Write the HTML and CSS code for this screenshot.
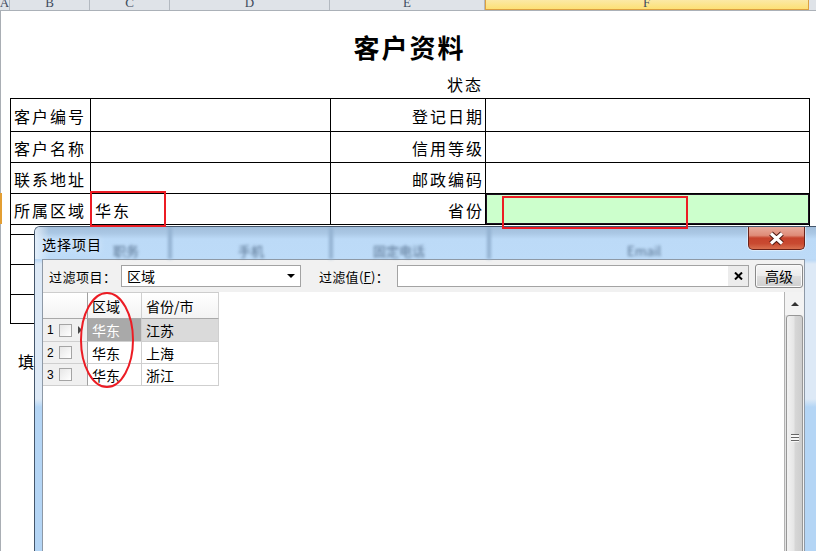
FILE: index.html
```html
<!DOCTYPE html>
<html lang="zh-CN">
<head>
<meta charset="utf-8">
<title>客户资料</title>
<link rel="stylesheet" href="styles.css">
</head>
<body>
<div class="sheet">
  <div class="colheads">
    <div class="ch"><span>A</span></div>
    <div class="ch"><span>B</span></div>
    <div class="ch"><span>C</span></div>
    <div class="ch"><span>D</span></div>
    <div class="ch"><span>E</span></div>
    <div class="ch ch-active"><span>F</span></div>
    <div class="ch ch-rest"></div>
  </div>
  <div class="title">客户资料</div>
  <div class="status-row"><div class="status">状态</div></div>
  <div class="form">
    <div class="cell lbl">客户编号</div><div class="cell"></div><div class="cell rlbl">登记日期</div><div class="cell"></div>
    <div class="cell lbl">客户名称</div><div class="cell"></div><div class="cell rlbl">信用等级</div><div class="cell"></div>
    <div class="cell lbl">联系地址</div><div class="cell"></div><div class="cell rlbl">邮政编码</div><div class="cell"></div>
    <div class="cell lbl">所属区域</div><div class="cell val">华东</div><div class="cell rlbl">省份</div><div class="cell sel"></div>
    <div class="cell"></div><div class="cell wide"></div>
    <div class="cell"></div><div class="cell wide"></div>
    <div class="cell"></div><div class="cell wide"></div>
    <div class="cell"></div><div class="cell wide"></div>
  </div>
  <div class="note">填</div>
</div>

<div class="row-marker"></div>
<div class="mark mark-region"></div>
<div class="mark mark-province"></div>

<div class="dialog">
  <div class="titlebar">
    <div class="ghost">
      <div class="gseg g1">职务</div><div class="gline"></div>
      <div class="gseg g2">手机</div><div class="gline"></div>
      <div class="gseg g3">固定电话</div><div class="gline"></div>
      <div class="gseg g4">Email</div>
    </div>
    <div class="title-text">选择项目</div>
    <div class="close">
      <svg width="17" height="15" viewBox="0 0 17 15">
        <path d="M3 2.5 L14 12.5 M14 2.5 L3 12.5" stroke="#4d1810" stroke-width="5.2" fill="none"/>
        <path d="M3 2.5 L14 12.5 M14 2.5 L3 12.5" stroke="#ffffff" stroke-width="3.2" fill="none"/>
      </svg>
    </div>
  </div>
  <div class="client">
    <div class="toolbar">
      <div class="tlabel">过滤项目：</div>
      <div class="combo"><span>区域</span><i class="caret"></i></div>
      <div class="tlabel tlabel2">过滤值(<u>F</u>)：</div>
      <div class="filter">
        <div class="clear">
          <svg width="9" height="8" viewBox="0 0 9 8"><path d="M1 0.5 L8 7.5 M8 0.5 L1 7.5" stroke="#000" stroke-width="2" fill="none"/></svg>
        </div>
      </div>
      <div class="btn">高级</div>
    </div>
    <div class="gridarea">
      <div class="grid">
        <div class="gh corner"></div>
        <div class="gh">区域</div>
        <div class="gh">省份/市</div>

        <div class="rh"><span class="num">1</span><span class="cb"></span><i class="arrow"></i></div>
        <div class="gc hl">华东</div>
        <div class="gc hl2">江苏</div>

        <div class="rh"><span class="num">2</span><span class="cb"></span></div>
        <div class="gc">华东</div>
        <div class="gc">上海</div>

        <div class="rh"><span class="num">3</span><span class="cb"></span></div>
        <div class="gc">华东</div>
        <div class="gc">浙江</div>
      </div>
      <div class="filler"></div>
      <div class="vscroll">
        <div class="up"><i class="uparrow"></i></div>
        <div class="thumb"><i class="grip"></i></div>
      </div>
    </div>
  </div>
</div>

<svg class="ellipse" width="58" height="99" viewBox="0 0 58 99">
  <ellipse cx="28" cy="49" rx="26" ry="47" fill="none" stroke="#ec1c24" stroke-width="2"/>
</svg>
</body>
</html>
```

FILE: styles.css
```css
* { box-sizing: border-box; margin: 0; padding: 0; }
html, body { width: 816px; height: 551px; overflow: hidden; }
body {
  position: relative;
  background: #fff;
  color: #000;
  font-family: "Liberation Sans", "Noto Sans CJK SC", sans-serif;
}

/* ---------- spreadsheet ---------- */
.sheet {
  height: 551px;
  box-shadow: inset 1px 0 0 #a9aeb4;
}
.colheads {
  display: grid;
  grid-template-columns: 10px 80px 80px 160px 155px 324px 7px;
  height: 11px;
  background: #dfe3e8;
  border-bottom: 1px solid #abb1b8;
}
.ch {
  height: 10px;
  overflow: hidden;
  display: flex;
  justify-content: center;
  align-items: flex-end;
  border-right: 1px solid #b3b9c0;
  font: 13px/13px "Liberation Serif", serif;
  color: #3d4a5c;
}
.ch span { display: block; margin-bottom: 1px; }
.ch-active {
  background: linear-gradient(180deg, #fbe9a6, #fddf70);
  border-right-color: #dca041;
  box-shadow: inset 1px 0 0 #dca041, inset 0 -1px 0 #dca041;
}
.ch-rest { border-right: 0; }

.title {
  margin-top: 19px;
  margin-left: 10px;
  width: 799px;
  height: 34px;
  text-align: center;
  font: 700 26px/34px "Noto Sans CJK SC", sans-serif;
  letter-spacing: 2px;
}
.status-row {
  display: grid;
  grid-template-columns: 330px 155px;
  height: 34px;
}
.status {
  grid-column: 2;
  align-self: end;
  text-align: right;
  padding-right: 2px;
  padding-bottom: 1px;
  font-size: 16px;
  line-height: 22px;
  letter-spacing: 2px;
}
.form {
  display: grid;
  margin-left: 10px;
  width: 800px;
  grid-template-columns: 79px 239px 154px 323px;
  grid-template-rows: 32px 30px 30px 30px 9px 29px 29px 28px;
  gap: 1px;
  background: #000;
  border: 1px solid #000;
}
.cell {
  background: #fff;
  display: flex;
  align-items: center;
  padding-top: 1px;
  font-size: 16px;
  letter-spacing: 2px;
  white-space: nowrap;
}
.lbl { padding-left: 3px; }
.rlbl { justify-content: flex-end; padding-right: 1px; }
.val { padding-left: 4px; }
.sel { background: #ccffcc; box-shadow: inset 0 0 0 1px #1d1020; }
.wide { grid-column: span 3; }
.note {
  margin-top: 28px;
  padding-left: 18px;
  font-size: 16px;
  line-height: 22px;
}

.row-marker {
  position: absolute;
  left: 0;
  top: 193px;
  width: 2px;
  height: 31px;
  background: #e39e33;
}
.mark {
  position: absolute;
  border: 2px solid #ec1c24;
  z-index: 5;
}
.mark-region { left: 90px; top: 191px; width: 76px; height: 36px; }
.mark-province { left: 502px; top: 196px; width: 186px; height: 33px; }

/* ---------- dialog ---------- */
.dialog {
  position: absolute;
  left: 34px;
  top: 226px;
  width: 782px;
  height: 340px;
  border: 1px solid #44566b;
  border-right: 0;
  border-radius: 6px 0 0 0;
  background: linear-gradient(180deg, #bcd9f6 0, #bcd9f6 33px, #dde9f6 37px, #dde9f6 172px, #b4d5f5 180px, #b4d5f5 100%);
  display: flex;
  flex-direction: column;
  overflow: hidden;
  z-index: 3;
}
.titlebar {
  position: relative;
  height: 32px;
  flex-shrink: 0;
  display: flex;
  align-items: flex-start;
  background:
    linear-gradient(90deg, rgba(235,243,251,.85) 0, rgba(235,243,251,0) 14px),
    linear-gradient(180deg, #a2bedb 0, #aac7e4 6px, #bcdaf7 12px, #bddbf8 100%);
}
.ghost {
  position: absolute;
  left: 0; top: 0; right: 0; bottom: 0;
  display: flex;
  filter: blur(1.4px);
  font-family: "Noto Sans CJK SC", sans-serif;
  font-size: 13px;
  color: #56718f;
}
.gseg { padding-top: 15px; line-height: 17px; white-space: nowrap; }
.g1 { width: 133px; padding-left: 78px; }
.g2 { width: 157px; padding-left: 66px; }
.g3 { width: 154px; padding-left: 40px; }
.g4 { padding-left: 136px; }
.gline { width: 4px; background: #93b2d1; }

.title-text {
  position: relative;
  padding: 7px 0 0 7px;
  font-family: "Noto Sans CJK SC", sans-serif;
  font-size: 14px;
  line-height: 20px;
  letter-spacing: 1px;
  text-shadow: 0 0 6px #e8f2fc;
}
.close {
  position: relative;
  margin-left: auto;
  margin-right: 11px;
  width: 57px;
  height: 23px;
  border: 1px solid #6b2219;
  border-top: 0;
  border-radius: 0 0 5px 5px;
  background: linear-gradient(180deg, #e9aa9b 0, #df8c78 38%, #c6432c 50%, #c94a31 75%, #d8704f 100%);
  box-shadow: 0 0 0 1px rgba(255,255,255,.45);
  display: flex;
  align-items: center;
  justify-content: center;
}

.client {
  flex: 1;
  margin: 0 11px 0 7px;
  background: #fff;
  border: 1px solid #8e99a6;
  border-bottom: 0;
  display: flex;
  flex-direction: column;
  min-height: 0;
}
.toolbar {
  height: 32px;
  flex-shrink: 0;
  display: flex;
  align-items: center;
  padding-left: 6px;
  background: #f1f1f1;
  font-family: "Noto Sans CJK SC", sans-serif;
  font-size: 13px;
}
.tlabel { width: 72px; letter-spacing: .5px; white-space: nowrap; }
.tlabel2 { width: 78px; margin-left: 18px; letter-spacing: .3px; }
.tlabel u { text-underline-offset: 1px; }
.combo {
  width: 180px;
  height: 22px;
  border: 1px solid #a3a3a3;
  background: #fff;
  display: flex;
  align-items: center;
  padding-left: 5px;
  font-size: 14px;
}
.caret {
  margin-left: auto;
  margin-right: 5px;
  width: 0; height: 0;
  border-left: 4px solid transparent;
  border-right: 4px solid transparent;
  border-top: 4px solid #000;
}
.filter {
  width: 352px;
  height: 22px;
  border: 1px solid #a3a3a3;
  background: #fff;
  display: flex;
  justify-content: flex-end;
}
.clear {
  width: 20px;
  background: #ececec;
  display: flex;
  align-items: center;
  justify-content: center;
}
.btn {
  margin-left: 6px;
  width: 48px;
  height: 24px;
  border: 1px solid #8a8a8a;
  border-radius: 3px;
  background: linear-gradient(180deg, #f6f6f6 0, #ebebeb 48%, #dddddd 52%, #cfcfcf 100%);
  box-shadow: inset 0 0 0 1px #fafafa;
  display: flex;
  align-items: center;
  justify-content: center;
  font-size: 14px;
}

.gridarea {
  flex: 1;
  display: flex;
  min-height: 0;
}
.grid {
  display: grid;
  grid-template-columns: 45px 54px 77px;
  grid-template-rows: 27px 23px 22px 22px;
  align-self: flex-start;
  font-family: "Noto Sans CJK SC", sans-serif;
  font-size: 14px;
}
.gh {
  background: linear-gradient(180deg, #ffffff, #f3f3f3);
  border-top: 1px solid #cdcdcd;
  border-bottom: 1px solid #a9a9a9;
  border-right: 1px solid #d0d0d0;
  display: flex;
  align-items: center;
  padding-left: 4px;
}
.gh.corner { border-right-color: #a0a0a0; }
.rh {
  background: #f0f0f0;
  border-right: 1px solid #a0a0a0;
  border-bottom: 1px solid #cfcfcf;
  display: flex;
  align-items: center;
  padding-left: 4px;
  font-family: "Liberation Sans", sans-serif;
  font-size: 12px;
}
.num { width: 12px; }
.cb {
  width: 13px;
  height: 13px;
  border: 1px solid #a4a4a4;
  background: linear-gradient(135deg, #e6e6e6, #ffffff);
}
.arrow {
  margin-left: 6px;
  width: 0; height: 0;
  border-top: 4px solid transparent;
  border-bottom: 4px solid transparent;
  border-left: 4px solid #454545;
}
.gc {
  border-right: 1px solid #cfcfcf;
  border-bottom: 1px solid #cfcfcf;
  display: flex;
  align-items: center;
  padding-left: 4px;
}
.gc.hl { background: #a9a9a9; color: #fff; }
.gc.hl2 { background: #dadada; }
.filler { flex: 1; }
.vscroll {
  width: 20px;
  flex-shrink: 0;
  border-left: 1px solid #b3b3b3;
  background: linear-gradient(90deg, #e3e3e3, #f1f1f1);
  display: flex;
  flex-direction: column;
}
.up {
  height: 23px;
  flex-shrink: 0;
  display: flex;
  align-items: center;
  justify-content: center;
  background: #f3f3f3;
}
.uparrow {
  width: 0; height: 0;
  border-left: 4px solid transparent;
  border-right: 4px solid transparent;
  border-bottom: 4px solid #333;
}
.thumb {
  height: 246px;
  flex-shrink: 0;
  margin: 0 1px;
  border: 1px solid #979797;
  border-radius: 3px;
  background: linear-gradient(90deg, #f2f2f2 0, #e6e6e6 45%, #d6d6d6 55%, #cdcdcd 100%);
  display: flex;
  align-items: center;
  justify-content: center;
}
.grip {
  width: 8px;
  height: 8px;
  background: repeating-linear-gradient(180deg, #666 0, #666 1px, #f7f7f7 1px, #f7f7f7 3px);
}

.ellipse {
  position: absolute;
  left: 79px;
  top: 291px;
  z-index: 6;
}
```
